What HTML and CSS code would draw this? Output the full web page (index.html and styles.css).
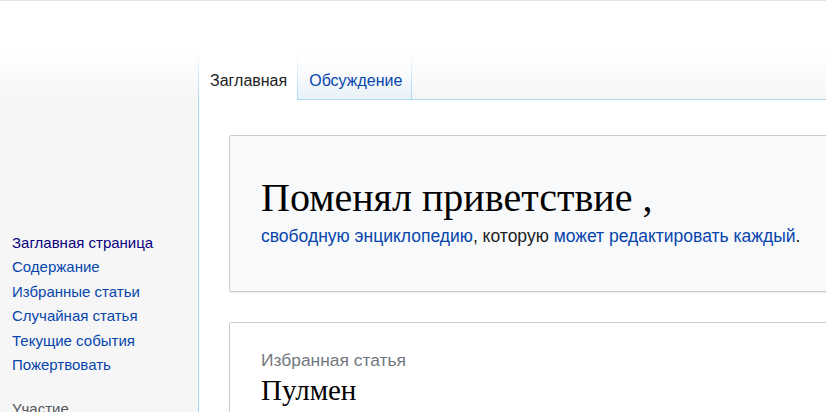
FILE: index.html
```html
<!DOCTYPE html>
<html lang="ru">
<head>
<meta charset="utf-8">
<title>Википедия</title>
<link rel="stylesheet" href="styles.css">
</head>
<body>
<div class="topline"></div>
<div class="layout">
  <aside class="sidebar">
    <nav class="portal">
      <ul class="nav-list">
        <li><a class="visited" href="#">Заглавная страница</a></li>
        <li><a href="#">Содержание</a></li>
        <li><a href="#">Избранные статьи</a></li>
        <li><a href="#">Случайная статья</a></li>
        <li><a href="#">Текущие события</a></li>
        <li><a href="#">Пожертвовать</a></li>
      </ul>
    </nav>
    <h3 class="portal-heading">Участие</h3>
  </aside>
  <main class="right">
    <div class="tabs">
      <a class="tab selected" href="#">Заглавная</a>
      <a class="tab" href="#">Обсуждение</a>
      <div class="tabs-fill"></div>
    </div>
    <div class="content">
      <section class="box welcome">
        <h1 class="welcome-title">Поменял приветствие ,</h1>
        <p class="welcome-sub"><a href="#">свободную энциклопедию</a>, которую <a href="#">может редактировать каждый</a>.</p>
      </section>
      <section class="box featured">
        <div class="featured-label">Избранная статья</div>
        <h2 class="featured-title">Пулмен</h2>
      </section>
    </div>
  </main>
</div>
</body>
</html>
```
FILE: styles.css
```css
html, body {
  margin: 0;
  padding: 0;
  overflow: hidden;
}
body {
  font-family: "Liberation Sans", Arial, sans-serif;
  background: #f6f6f6 linear-gradient(to bottom, #ffffff 52px, #f6f6f6 100px) no-repeat;
  color: #202122;
  height: 412px;
}
a {
  text-decoration: none;
  color: #0645ad;
}
.topline {
  height: 1px;
  background: #e2e2e2;
}
.layout {
  display: grid;
  grid-template-columns: 198px 1fr;
}
.sidebar {
  padding-top: 230px;
}
.nav-list {
  list-style: none;
  margin: 0;
  padding: 0 0 0 12px;
}
.nav-list li {
  font-size: 15px;
  line-height: 24.4px;
}
.nav-list a.visited {
  color: #0b0080;
}
.portal-heading {
  margin: 22px 0 0 12px;
  font-size: 15px;
  font-weight: normal;
  color: #54595d;
  line-height: 20px;
}
.right {
  min-width: 0;
}
.tabs {
  display: flex;
  align-items: flex-end;
  height: 99px;
}
.tab {
  box-sizing: border-box;
  height: 48px;
  padding: 20px 10px 0 11px;
  font-size: 16px;
  line-height: 18px;
  white-space: nowrap;
  border-bottom: 1px solid #a7d7f9;
  background:
    linear-gradient(to bottom, rgba(167,215,249,0) 0, #a7d7f9 100%) right top / 1px 100% no-repeat,
    linear-gradient(to bottom, #ffffff 0%, #fbfcfe 40%, #e8f2f8 100%);
}
.tab.selected {
  color: #202122;
  border-bottom: 0;
  padding-left: 12px;
  padding-right: 11px;
  background:
    linear-gradient(to bottom, rgba(167,215,249,0) 0, #a7d7f9 100%) left top / 1px 100% no-repeat,
    linear-gradient(to bottom, rgba(167,215,249,0) 0, #a7d7f9 100%) right top / 1px 100% no-repeat,
    #ffffff;
}
.tabs-fill {
  flex: 1;
  height: 48px;
  border-bottom: 1px solid #a7d7f9;
}
.content {
  background: #ffffff;
  border-left: 1px solid #a7d7f9;
  padding: 35px 0 40px 30px;
  height: 400px;
}
.box {
  border: 1px solid #c8ccd1;
  border-radius: 2px;
  margin-right: -20px;
  box-shadow: 0 1px 1px rgba(0, 0, 0, 0.08);
}
.welcome {
  background: #f8f9fa;
  height: 157px;
  box-sizing: border-box;
  padding: 40px 0 0 31px;
}
.welcome-title {
  margin: 0;
  font-family: "Liberation Serif", "Times New Roman", serif;
  font-weight: normal;
  font-size: 40px;
  line-height: 44px;
  color: #000;
}
.welcome-sub {
  margin: 5px 0 0;
  font-size: 17.5px;
  line-height: 22px;
  color: #202122;
}
.featured {
  margin-top: 30px;
  background: #ffffff;
  padding: 26px 0 0 31px;
  height: 120px;
}
.featured-label {
  font-size: 17.4px;
  line-height: 22px;
  color: #72777d;
}
.featured-title {
  margin: 3px 0 0;
  font-family: "Liberation Serif", "Times New Roman", serif;
  font-weight: normal;
  font-size: 29px;
  line-height: 32px;
  color: #000;
}
```
